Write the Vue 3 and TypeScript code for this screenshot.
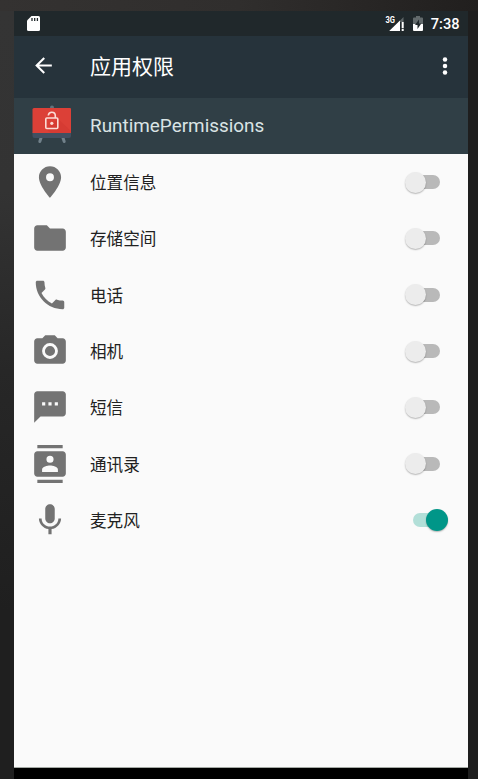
<script setup lang="ts">
import { ref } from 'vue'

interface Permission {
  name: string
  path: string
  granted: boolean
}

const permissions = ref<Permission[]>([
  { name: '位置信息', granted: false, path: 'M12 2C8.13 2 5 5.13 5 9c0 5.25 7 13 7 13s7-7.75 7-13c0-3.87-3.13-7-7-7zm0 9.5a2.5 2.5 0 0 1 0-5 2.5 2.5 0 0 1 0 5z' },
  { name: '存储空间', granted: false, path: 'M10 4H4c-1.1 0-1.99.9-1.99 2L2 18c0 1.1.9 2 2 2h16c1.1 0 2-.9 2-2V8c0-1.1-.9-2-2-2h-8l-2-2z' },
  { name: '电话', granted: false, path: 'M6.62 10.79c1.44 2.83 3.76 5.14 6.59 6.59l2.2-2.2c.27-.27.67-.36 1.02-.24 1.12.37 2.33.57 3.57.57.55 0 1 .45 1 1V20c0 .55-.45 1-1 1-9.39 0-17-7.61-17-17 0-.55.45-1 1-1h3.5c.55 0 1 .45 1 1 0 1.25.2 2.45.57 3.57.11.35.03.74-.25 1.02l-2.2 2.2z' },
  { name: '相机', granted: false, path: 'M12 8.8a3.2 3.2 0 1 0 0 6.4 3.2 3.2 0 0 0 0-6.4zM9 2 7.17 4H4c-1.1 0-2 .9-2 2v12c0 1.1.9 2 2 2h16c1.1 0 2-.9 2-2V6c0-1.1-.9-2-2-2h-3.17L15 2H9zm3 15a5 5 0 1 1 0-10 5 5 0 0 1 0 10z' },
  { name: '短信', granted: false, path: 'M20 2H4c-1.1 0-1.99.9-1.99 2L2 22l4-4h14c1.1 0 2-.9 2-2V4c0-1.1-.9-2-2-2zM9 11H7V9h2v2zm4 0h-2V9h2v2zm4 0h-2V9h2v2z' },
  { name: '通讯录', granted: false, path: 'M20 0H4v2h16V0zM4 24h16v-2H4v2zM20 4H4c-1.1 0-2 .9-2 2v12c0 1.1.9 2 2 2h16c1.1 0 2-.9 2-2V6c0-1.1-.9-2-2-2zm-8 2.75a2.25 2.25 0 1 1 0 4.5 2.25 2.25 0 0 1 0-4.5zM17 17H7v-1.5c0-1.67 3.33-2.5 5-2.5s5 .83 5 2.5V17z' },
  { name: '麦克风', granted: true, path: 'M12 14c1.66 0 2.99-1.34 2.99-3L15 5c0-1.66-1.34-3-3-3S9 3.34 9 5v6c0 1.66 1.34 3 3 3zm5.3-3c0 3-2.54 5.1-5.3 5.1S6.7 14 6.7 11H5c0 3.41 2.72 6.23 6 6.72V21h2v-3.28c3.28-.48 6-3.3 6-6.72h-1.7z' },
])
</script>

<template>
  <main class="device">
    <div class="screen">
      <div class="status">
        <svg class="sd" viewBox="0 0 13 16">
          <path fill="#fff" d="M4.5 0H11.5Q13 0 13 1.5V13.5Q13 15 11.5 15H1.5Q0 15 0 13.5V4.5z" />
          <path stroke="#20282b" stroke-width="1.3" d="M5 2v3M7.7 2v3M10.4 2v3" />
        </svg>
        <div class="indicators">
          <svg class="signal" viewBox="0 0 20 16">
            <path fill="#5c6466" d="M18.5 1v5H15V15H5z" />
            <path fill="#fff" d="M15 4.500v10.500H4.200z" />
            <path stroke="#fff" stroke-width="2" d="M17.700 6v6.200M17.700 13v2" />
            <text x="0.500" y="7" textLength="9.500" lengthAdjust="spacingAndGlyphs">3G</text>
          </svg>
          <svg class="battery" viewBox="0 0 10 15">
            <path fill="#626a6c" d="M3 0h4v1.500h2q1 0 1 1V8H0V2.500q0-1 1-1h2z" />
            <path fill="#fff" d="M0 8h10v6q0 1-1 1H1q-1 0-1-1z" />
            <path fill="#20282b" d="M6 3.500 2 9h2.500v4L8.300 7.500H6z" />
          </svg>
          <span class="clock">7:38</span>
        </div>
      </div>
      <header class="toolbar">
        <svg class="back" viewBox="0 0 24 24"><path fill="#fff" d="M20 11H7.830l5.590-5.590L12 4l-8 8 8 8 1.410-1.410L7.830 13H20v-2z" /></svg>
        <h1>应用权限</h1>
        <svg class="more" viewBox="0 0 6 18"><g fill="#fff"><circle cx="3" cy="2.500" r="2.250" /><circle cx="3" cy="9" r="2.250" /><circle cx="3" cy="15.500" r="2.250" /></g></svg>
      </header>
      <section class="app">
        <svg class="logo" viewBox="0 0 40 40">
          <circle cx="20" cy="1.500" r="2" fill="#62737c" />
          <path d="m9 32-1.200 3.500M31 32l1.200 3.500" stroke="#71818a" stroke-width="3" stroke-linecap="round" />
          <path fill="#415061" d="M.5 26h38.500v4q0 2-2 2H2.500q-2 0-2-2z" />
          <path fill="#dc4037" d="M2 2h36q1 0 1 1v24H.500V3.500Q.500 2 2 2z" />
          <path fill="#cf352f" d="M26 13 39 25v2H19l-5-4z" opacity=".5" />
          <rect x="13.800" y="12" width="12" height="10.500" rx="1" fill="none" stroke="#fbdcd6" stroke-width="1.600" />
          <path d="M16.300 9.500q.3-3.300 3.500-3.300 3.500 0 3.500 3.500V12" fill="none" stroke="#fbdcd6" stroke-width="1.600" />
          <circle cx="19.800" cy="17.300" r="1.600" fill="#fbdcd6" />
        </svg>
        <span class="app-name">RuntimePermissions</span>
      </section>
      <ul class="list">
        <li v-for="item in permissions" :key="item.name" class="row">
          <svg class="icon" viewBox="0 0 24 24"><path :d="item.path" fill="#737373" fill-rule="evenodd" /></svg>
          <span class="name">{{ item.name }}</span>
          <button class="switch" :class="{ on: item.granted }" role="switch" :aria-checked="item.granted" @click="item.granted = !item.granted">
            <i class="thumb"></i>
          </button>
        </li>
      </ul>
    </div>
  </main>
</template>

<style>
body {
  margin: 0;
}
</style>

<style scoped>
.device {
  box-sizing: border-box;
  height: 779px;
  padding: 11px 10px 0 14px;
  background:
    linear-gradient(#1e1e1e, #1e1e1e) right 11px / 10px 100% no-repeat,
    linear-gradient(#343434, #333 180px, #272727 360px, #1f1f1f 600px) left 11px / 14px 100% no-repeat,
    linear-gradient(90deg, #343231, #302e2d 50%, #211f1e);
  font-family: Roboto, "Noto Sans CJK SC", sans-serif;
  overflow: hidden;
}
.screen {
  height: 768px;
  display: flex;
  flex-direction: column;
  background: #000;
}
.status {
  box-sizing: border-box;
  height: 25px;
  flex: none;
  display: flex;
  align-items: center;
  justify-content: space-between;
  padding: 0 8.500px 0 13px;
  background: #20282b;
}
.sd {
  width: 13px;
  height: 16px;
}
.indicators {
  display: flex;
  align-items: center;
}
.signal {
  width: 20px;
  height: 16px;
  margin-right: 8px;
  overflow: visible;
}
.signal text {
  fill: #fff;
  font-family: Roboto, sans-serif;
  font-size: 9px;
  font-weight: 700;
}
.battery {
  width: 10px;
  height: 15px;
  margin-right: 7.500px;
}
.clock {
  color: #fff;
  font-size: 14.600px;
  font-weight: 500;
  line-height: 25px;
  padding-top: 1px;
}
.toolbar {
  box-sizing: border-box;
  height: 62px;
  flex: none;
  display: flex;
  align-items: center;
  padding: 0 20px 3px 17px;
  background: #26333b;
}
.back {
  width: 25px;
  height: 25px;
  margin-right: 34px;
}
h1 {
  flex: 1;
  margin: 0;
  padding-top: 2px;
  color: #fff;
  font-size: 21px;
  font-weight: 400;
  line-height: 30px;
}
.more {
  width: 6px;
  height: 18px;
}
.app {
  box-sizing: border-box;
  height: 56px;
  flex: none;
  display: flex;
  align-items: center;
  gap: 18px;
  padding: 0 18px;
  background: #303f46;
  color: #dae4e5;
  font-size: 18.900px;
}
.app-name {
  padding-bottom: 2px;
}
.logo {
  width: 40px;
  height: 40px;
  overflow: visible;
}
.list {
  box-sizing: border-box;
  height: 614px;
  margin: 0;
  padding: 0;
  list-style: none;
  background: #fafafa;
  border-bottom: 1px solid #a5aaa5;
}
.row {
  box-sizing: border-box;
  height: 56.300px;
  display: flex;
  align-items: center;
  padding: 0 20px 0 16.700px;
}
.icon {
  width: 38px;
  height: 38px;
  margin-right: 21.300px;
}
.name {
  flex: 1;
  padding-top: 4px;
  color: #212121;
  font-size: 16.600px;
  line-height: 24px;
}
.switch {
  width: 35px;
  height: 14px;
  padding: 0;
  margin-right: 8px;
  border: 0;
  border-radius: 7px;
  display: flex;
  align-items: center;
  background: linear-gradient(#b9b9b9, #b9b9b9) right / 27px 100% no-repeat;
}
.thumb {
  width: 21px;
  height: 21px;
  flex: none;
  border-radius: 50%;
  background: #ececec;
  box-shadow: 0 1px 1.500px rgba(0, 0, 0, .28);
}
.switch.on {
  margin-right: 0;
  justify-content: flex-end;
  background: linear-gradient(#b2dfd8, #b2dfd8) left / 27px 100% no-repeat;
}
.switch.on .thumb {
  width: 22px;
  height: 22px;
  background: #009688;
}
</style>
